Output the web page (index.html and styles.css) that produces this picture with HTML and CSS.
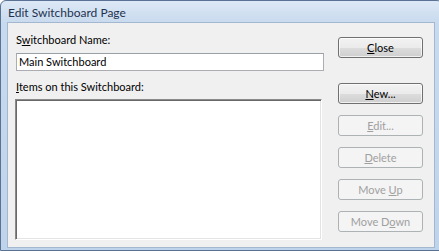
FILE: index.html
```html
<!DOCTYPE html>
<html lang="en">
<head>
    <meta charset="UTF-8">
    <title>Edit Switchboard Page</title>
    <link rel="stylesheet" href="styles.css">
</head>
<body>
    <div class="window">
        <div class="titlebar">Edit Switchboard Page</div>
        <div class="client">
            <div class="left">
                <label class="label">S<u>w</u>itchboard Name:</label>
                <div class="textbox">Main Switchboard</div>
                <label class="label items-label"><u>I</u>tems on this Switchboard:</label>
                <div class="listbox"></div>
            </div>
            <div class="buttons">
                <button class="btn"><u>C</u>lose</button>
                <button class="btn btn-new"><u>N</u>ew...</button>
                <button class="btn" disabled><u>E</u>dit...</button>
                <button class="btn" disabled><u>D</u>elete</button>
                <button class="btn" disabled>Move <u>U</u>p</button>
                <button class="btn" disabled>Move D<u>o</u>wn</button>
            </div>
        </div>
    </div>
</body>
</html>
```

FILE: styles.css
```css
* {
    margin: 0;
    padding: 0;
    box-sizing: border-box;
}

body {
    font-family: 'Lato', 'Liberation Sans', sans-serif;
    font-size: 11px;
    color: #000;
    background: #fff;
    width: 439px;
    height: 251px;
    overflow: hidden;
}

.window {
    width: 443px;
    height: 251px;
    display: flex;
    flex-direction: column;
    background: linear-gradient(180deg, #dce8f5 0px, #c8daee 22px, #bfd3ea 100%);
    border: 1px solid #5a7294;
    border-radius: 6px 6px 0 0;
}

.titlebar {
    height: 21px;
    padding: 4px 0 0 7px;
    color: #1e3250;
    font-size: 12px;
    line-height: 15px;
}

.client {
    flex: 1;
    margin: 0 7px 2px 6px;
    background: #f0f0f0;
    border: 1px solid #a3b8d0;
    display: flex;
    padding: 10px 0 0 8px;
}

.left {
    width: 308px;
    display: flex;
    flex-direction: column;
}

.label {
    line-height: 14px;
}

.textbox {
    margin-top: 6px;
    height: 18px;
    width: 308px;
    background: #fff;
    border: 1px solid #abadb3;
    border-top-color: #9a9ea6;
    padding: 0 2px;
    line-height: 16px;
}

.items-label {
    margin-top: 9px;
}

.listbox {
    margin: 5px 0 0 -1px;
    width: 307px;
    height: 141px;
    background: #fff;
    border-style: solid;
    border-width: 1px;
    border-color: #8a8a8a #fff #fff #8a8a8a;
    box-shadow: inset 1px 1px 0 #696969, inset -1px -1px 0 #e3e3e3;
}

.buttons {
    margin-left: 14px;
    display: flex;
    flex-direction: column;
    padding-top: 4px;
}

.btn {
    width: 85px;
    height: 21px;
    margin-bottom: 11px;
    font-family: inherit;
    font-size: 11px;
    color: #000;
    border: 1px solid #707070;
    border-radius: 3px;
    background: linear-gradient(180deg, #f2f2f2 0%, #ebebeb 50%, #dddddd 51%, #cfcfcf 100%);
    box-shadow: inset 0 0 0 1px rgba(255, 255, 255, 0.7);
}

.btn-new {
    margin-top: 14px;
}

.btn:disabled {
    color: #a0a0a0;
    border-color: #adb2b5;
    background: #f4f4f4;
    box-shadow: none;
}
```
